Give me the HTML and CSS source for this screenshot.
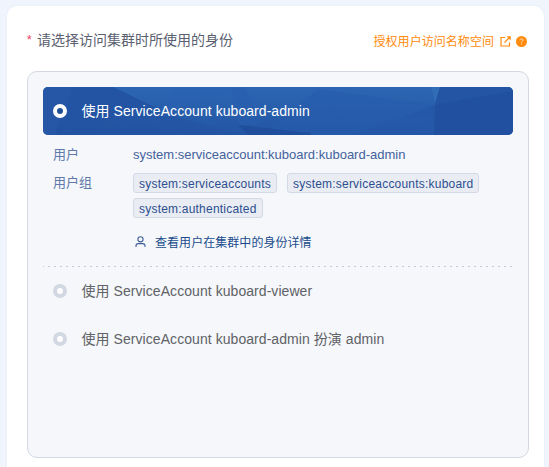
FILE: index.html
```html
<!DOCTYPE html>
<html lang="zh-CN">
<head>
<meta charset="utf-8">
<title>Kuboard</title>
<link rel="stylesheet" href="styles.css">
</head>
<body>
<main class="card">
  <header class="head">
    <h1 class="title"><span class="star">*</span>请选择访问集群时所使用的身份</h1>
    <a class="auth"><span class="auth-text">授权用户访问名称空间</span>
      <svg class="ext" viewBox="0 0 11 11"><path d="M5 1.5H1V10H9.5V6.5M4.5 6.5L9.5 1.5" fill="none" stroke="currentColor" stroke-width="1.2"/><path d="M6.5 .3H10.7V4.5Z" fill="currentColor"/></svg>
      <svg class="help" viewBox="0 0 11 11"><circle cx="5.5" cy="5.5" r="5.5" fill="currentColor"/><path d="M3.9 4.4C3.9 2.4 7.1 2.4 7.1 4.2C7.1 5.3 5.5 5.1 5.5 6.5M5.5 7.5V8.5" fill="none" stroke="#ffe6c8" stroke-width="1"/></svg>
    </a>
  </header>
  <section class="panel">
    <div class="option active">
      <svg class="facets" viewBox="0 0 470 48" preserveAspectRatio="none">
        <defs>
          <linearGradient id="base" x1="0" y1="1" x2="1" y2="0"><stop offset="0" stop-color="#2152a0"/><stop offset=".55" stop-color="#2559a9"/><stop offset="1" stop-color="#2254a3"/></linearGradient>
          <linearGradient id="sky" x1="0" y1="0" x2="0" y2="1"><stop offset="0" stop-color="#2c66b3"/><stop offset="1" stop-color="#2356a5"/></linearGradient>
        </defs>
        <path d="M0 0H470V48H0Z" fill="url(#base)"/>
        <path d="M0 0H29L12 48H0Z" fill="#2657a6"/>
        <path d="M70 0H388L392 18L310 48H205L117 26Z" fill="url(#sky)"/>
        <path d="M130 0H200L230 34L190 6L117 26Z" fill="#2a62b1" fill-opacity=".5"/>
        <path d="M29 0H70L118 23L77 28L18 48Z" fill="#2254a3"/>
        <path d="M189 2L202 0L215 38L195 38Z" fill="#275dad" fill-opacity=".5"/>
        <path d="M274 3L310 48H220Z" fill="#265bab" fill-opacity=".6"/>
        <path d="M274 2L392 18L310 48Z" fill="#265bab" fill-opacity=".6"/>
        <path d="M388 0H397L392 17Z" fill="#316cb7"/>
        <path d="M397 0H470V4L392 18Z" fill="#2355a4"/>
        <path d="M392 18L470 4V48H391Z" fill="#20509f"/>
        <path d="M195 38L268 46V48H205Z" fill="#1f4f9c"/>
      </svg>
      <span class="radio"></span><span class="label">使用 ServiceAccount kuboard-admin</span>
    </div>
    <dl class="details">
      <dt>用户</dt><dd class="user">system:serviceaccount:kuboard:kuboard-admin</dd>
      <dt>用户组</dt>
      <dd class="tags"><span class="tag">system:serviceaccounts</span><span class="tag">system:serviceaccounts:kuboard</span><span class="tag">system:authenticated</span></dd>
    </dl>
    <a class="view"><svg class="person" viewBox="0 0 11 12"><circle cx="5.5" cy="3.3" r="2.6"/><path d="M1 11V9.8Q1 7.6 3.3 7.6H7.7Q10 7.6 10 9.8V11"/></svg><span class="view-text">查看用户在集群中的身份详情</span></a>
    <svg class="divider" viewBox="0 0 470 1"><path d="M0 .5H470"/></svg>
    <div class="option"><span class="radio"></span><span class="label">使用 ServiceAccount kuboard-viewer</span></div>
    <div class="option"><span class="radio"></span><span class="label">使用 ServiceAccount kuboard-admin 扮演 admin</span></div>
  </section>
</main>
</body>
</html>
```
FILE: styles.css
```css
* { box-sizing: border-box; }
body {
  margin: 0;
  height: 467px;
  overflow: hidden;
  padding: 6px 5px 0 7px;
  background: #f0f4fc;
  font-family: "Liberation Sans", "Noto Sans CJK SC", sans-serif;
}
.card {
  height: 480px;
  padding: 20px 15px 0 20px;
  background: #fff;
  border-radius: 10px;
  box-shadow: 0 0 2px #e4e9f2;
}
.head {
  display: flex;
  align-items: center;
  justify-content: space-between;
  height: 30px;
  padding-right: 2px;
}
.title {
  display: flex;
  margin: -2px 0 0;
  font-size: 14px;
  font-weight: 400;
  line-height: 20px;
  color: #5a6070;
}
.star { width: 10px; font-size: 12px; color: #f5365c; }
.auth {
  display: flex;
  align-items: center;
  font-size: 12px;
  color: #ff8a0c;
}
.auth-text { margin-top: -1px; letter-spacing: 0.05px; }
.ext { width: 11px; height: 11px; margin-left: 6px; }
.help { width: 11px; height: 11px; margin-left: 5px; }
.panel {
  height: 387px;
  margin-top: 15px;
  padding: 15px;
  background: #f5f7fb;
  border: 1px solid #d3d8e1;
  border-radius: 10px;
}
.option {
  position: relative;
  display: flex;
  align-items: center;
  height: 48px;
  padding-left: 10px;
  font-size: 14px;
  color: #606266;
  overflow: hidden;
}
.active { color: #fff; border-radius: 5px; }
.facets { position: absolute; inset: 0; width: 100%; height: 100%; }
.radio {
  position: relative;
  width: 14px;
  height: 14px;
  border: 4px solid #d2d8e1;
  border-radius: 50%;
  background: #fff;
}
.active .radio { border-color: #fff; background: #204f94; }
.label {
  position: relative;
  margin: -2px 0 0 14.5px;
  letter-spacing: 0.06px;
  white-space: nowrap;
}
.details {
  display: grid;
  grid-template-columns: 80px 1fr;
  margin: 10px 0 0;
  padding-left: 10px;
  font-size: 13px;
  line-height: 19px;
  color: #6079a8;
}
.details dd { margin: 0; }
.user { height: 28px; color: #44629b; }
.tags { display: flex; flex-wrap: wrap; gap: 5px 10px; }
.tag {
  height: 20px;
  padding: 0 5px;
  font-size: 12px;
  line-height: 20px;
  letter-spacing: 0.21px;
  color: #2c4f8f;
  background: #e9ecf3;
  border: 1px solid #d3d9e5;
  border-radius: 3px;
}
.view {
  display: flex;
  align-items: center;
  height: 20px;
  margin: 14px 0 0 92px;
  font-size: 12px;
  color: #204b8c;
}
.view-text { margin-top: -2px; letter-spacing: 0.05px; }
.person { width: 11px; height: 12px; margin-right: 9px; fill: none; stroke: #3e5f96; stroke-width: 1.1; }
.divider { display: block; width: 470px; height: 1px; margin-top: 14px; stroke: #c5c8d8; stroke-dasharray: 2 4; stroke-dashoffset: 1; }
```
